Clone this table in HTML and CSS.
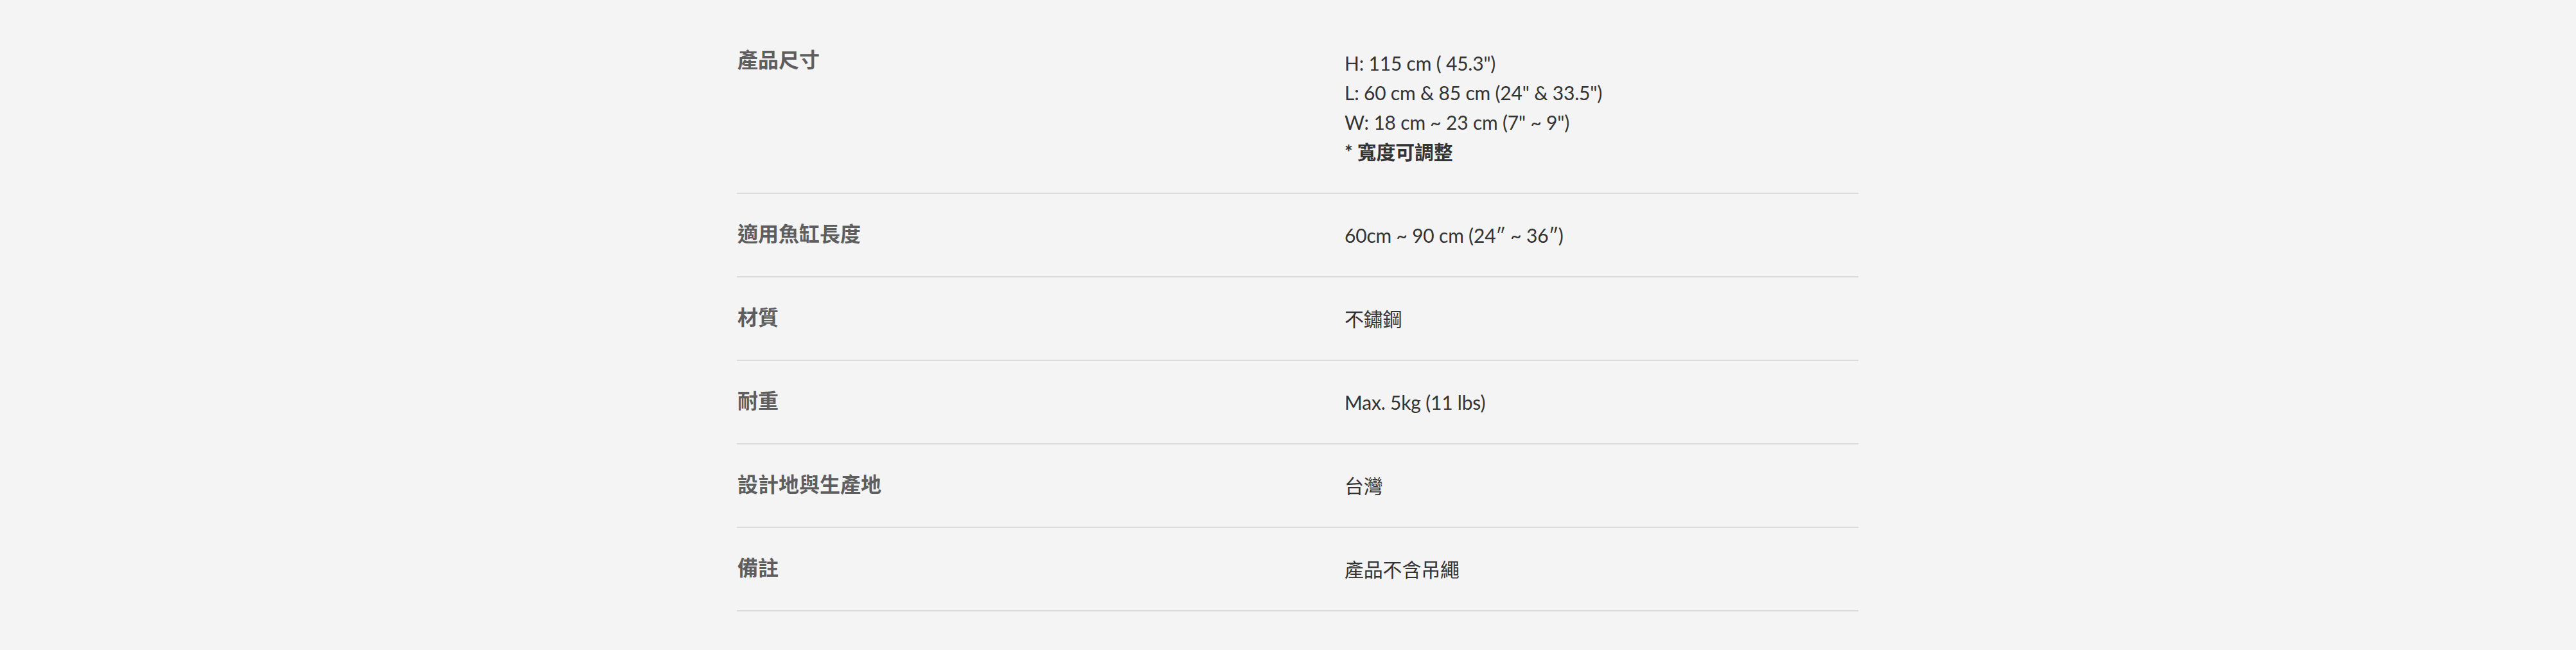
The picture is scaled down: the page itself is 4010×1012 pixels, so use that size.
FILE: index.html
```html
<!DOCTYPE html>
<html lang="zh-Hant">
<head>
<meta charset="utf-8">
<title>產品規格</title>
<link rel="stylesheet" href="styles.css">
</head>
<body>
<div class="page">
  <div class="specs">
    <div class="row">
      <div class="label">產品尺寸</div>
      <div class="value">
        <div>H: 115 cm ( 45.3")</div>
        <div>L: 60 cm &amp; 85 cm (24" &amp; 33.5")</div>
        <div>W: 18 cm ~ 23 cm (7" ~ 9")</div>
        <div class="note">* 寬度可調整</div>
      </div>
    </div>
    <div class="row">
      <div class="label">適用魚缸長度</div>
      <div class="value">60cm ~ 90 cm (24″ ~ 36″)</div>
    </div>
    <div class="row">
      <div class="label">材質</div>
      <div class="value">不鏽鋼</div>
    </div>
    <div class="row">
      <div class="label">耐重</div>
      <div class="value">Max. 5kg (11 lbs)</div>
    </div>
    <div class="row">
      <div class="label">設計地與生產地</div>
      <div class="value">台灣</div>
    </div>
    <div class="row">
      <div class="label">備註</div>
      <div class="value">產品不含吊繩</div>
    </div>
  </div>
</div>
</body>
</html>
```
FILE: styles.css
```css
html, body {
  margin: 0;
  padding: 0;
  background: #f4f4f4;
}

.page {
  padding: 34px 0 0 30px;
  min-height: 1012px;
  box-sizing: border-box;
}

.specs {
  width: 1746px;
  margin: 0 auto;
}

.row {
  display: grid;
  grid-template-columns: 946px 1fr;
  align-items: start;
  padding: 41px 0;
  border-bottom: 2px solid #dcdcdc;
}

.label {
  font-family: "Noto Sans CJK TC", "Noto Sans", sans-serif;
  font-weight: 700;
  font-size: 32px;
  line-height: 1.2;
  color: #5e5e5e;
  padding-left: 1px;
}

.row:first-child .label {
  margin-top: -3px;
}

.value {
  font-family: Lato, "Noto Sans CJK TC", sans-serif;
  font-size: 30px;
  line-height: 46px;
  letter-spacing: -0.2px;
  color: #333333;
}

.note {
  font-weight: 700;
}
```
